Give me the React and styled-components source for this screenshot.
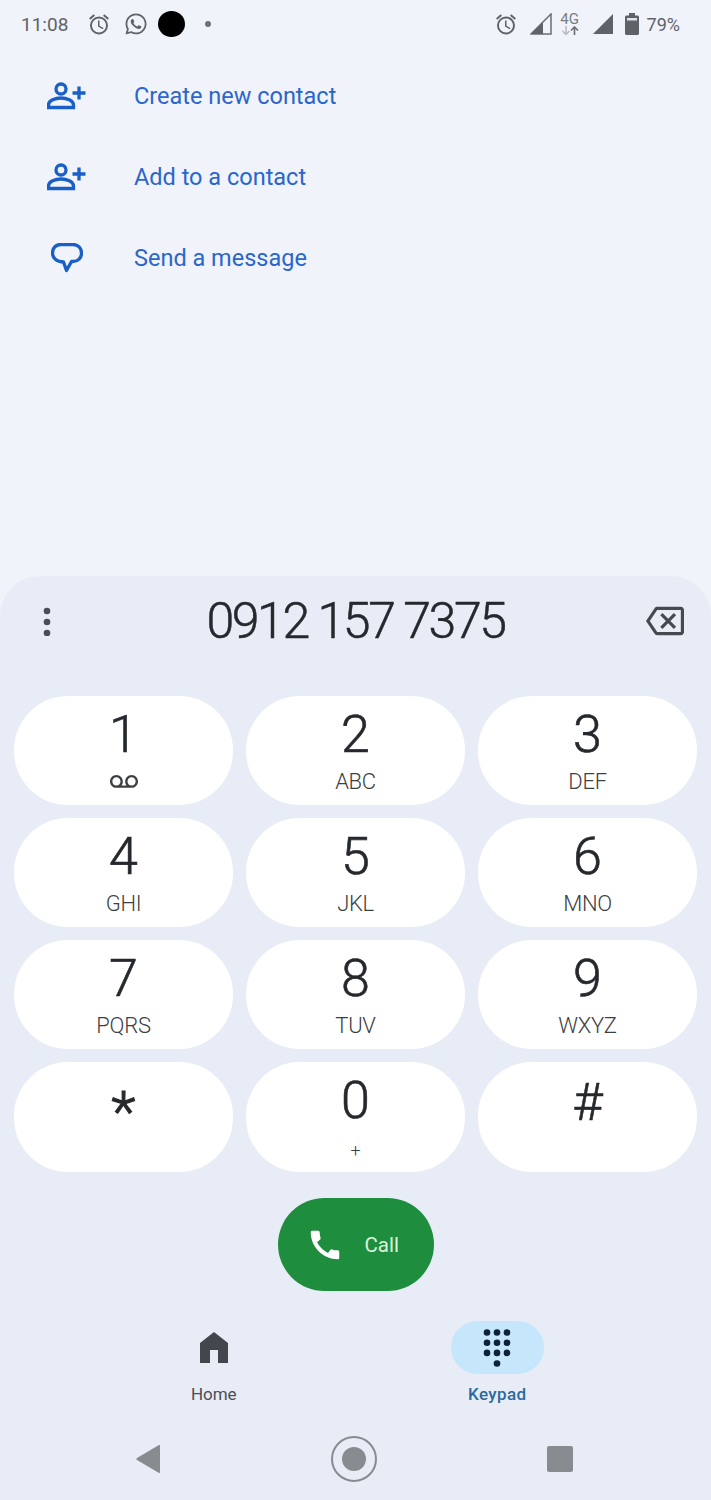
import React from 'react'
import styled, { createGlobalStyle } from 'styled-components'
import { FaWhatsapp } from 'react-icons/fa'
import { MdOutlineAlarm, MdOutlineBackspace, MdCall, MdVoicemail } from 'react-icons/md'

const GlobalStyle = createGlobalStyle`
  html, body {
    margin: 0;
    padding: 0;
    background: #f0f3fa;
  }
  * {
    box-sizing: border-box;
  }
`

const Page = styled.div`
  width: 711px;
  height: 1500px;
  display: flex;
  flex-direction: column;
  background: #f0f3fa;
  font-family: Roboto, "Liberation Sans", sans-serif;
  overflow: hidden;
`

const StatusBar = styled.div`
  height: 48px;
  flex: none;
  display: flex;
  align-items: center;
  justify-content: space-between;
  padding: 0 31px 0 21px;
  color: #5f6368;
`

const StatusGroup = styled.div`
  display: flex;
  align-items: center;
`

const Clock = styled.span`
  font-size: 19px;
  width: 66px;
`

const Battery = styled.span`
  font-size: 18px;
  margin-left: 8px;
`

const StatusSlot = styled.span`
  display: flex;
  align-items: center;
  justify-content: center;
  width: ${p => p.$w}px;
  margin-left: ${p => p.$ml || 0}px;
  margin-right: ${p => p.$mr || 0}px;
`

const Blot = styled.span`
  display: block;
  width: 27px;
  height: 26px;
  border-radius: 50%;
  background: #000;
`

const Dot = styled.span`
  display: block;
  width: 6px;
  height: 6px;
  border-radius: 50%;
  background: #6b7074;
`

const NetStack = styled.span`
  display: flex;
  flex-direction: column;
  align-items: center;
  width: 20px;
  margin: 0 12px 0 8px;
  line-height: 1;
`

const NetLabel = styled.span`
  font-size: 15px;
  line-height: 13px;
  color: #797e83;
`

const ActionList = styled.div`
  padding: 7px 0 0 47px;
`

const ActionRow = styled.div`
  height: 81px;
  display: flex;
  align-items: center;
  gap: 48px;
  color: #1a5fc8;
`

const ActionIcon = styled.span`
  width: 40px;
  display: flex;
  justify-content: center;
  padding-top: 1px;
`

const ActionText = styled.span`
  font-size: 23.5px;
  margin-left: -1px;
  color: #2a66cc;
`

const Sheet = styled.div`
  margin-top: auto;
  height: 924px;
  display: flex;
  flex-direction: column;
  background: #e8ecf6;
  border-radius: 40px 40px 0 0;
`

const NumberRow = styled.div`
  height: 90px;
  flex: none;
  display: flex;
  align-items: center;
  justify-content: space-between;
  padding: 0 27px 0 42px;
  color: #444a50;
`

const Number = styled.div`
  font-size: 50px;
  font-weight: 300;
  -webkit-text-stroke: 0.5px #25282c;
  letter-spacing: -2.4px;
  color: #25282c;
  margin-left: 13px;
`

const Keys = styled.div`
  margin: 30px 14px 0;
  height: 476px;
  display: grid;
  grid-template-columns: repeat(3, 1fr);
  grid-auto-rows: 1fr;
  gap: 13px;
`

const Key = styled.div`
  background: #fff;
  border-radius: 54px;
  display: flex;
  flex-direction: column;
  align-items: center;
  color: #25282c;
`

const Digit = styled.span`
  font-size: ${p => p.$size || 52}px;
  line-height: 60px;
  height: 60px;
  margin-top: ${p => p.$top || 9}px;
  font-weight: 300;
  -webkit-text-stroke: ${p => p.$stroke || 0.6}px #25282c;
`

const Letters = styled.span`
  font-size: ${p => (p.$small ? 18 : 22)}px;
  line-height: 26px;
  font-weight: 300;
  letter-spacing: -0.3px;
  color: #3c4043;
  display: flex;
  align-items: center;
  height: 26px;
  margin-top: ${p => (p.$small ? 7 : 4)}px;
`

const CallButton = styled.div`
  margin: 26px auto 0;
  width: 156px;
  height: 93px;
  flex: none;
  background: #1e8e3e;
  border-radius: 47px;
  display: flex;
  align-items: center;
  padding-left: 28px;
  gap: 21px;
  color: #fff;
`

const CallText = styled.span`
  font-size: 20.5px;
  color: #d8f5de;
`

const Tabs = styled.div`
  margin-top: 30px;
  padding: 0 72px;
  display: grid;
  grid-template-columns: 1fr 1fr;
`

const Tab = styled.div`
  display: flex;
  flex-direction: column;
  align-items: center;
`

const TabPill = styled.div`
  width: 93px;
  height: 53px;
  border-radius: 27px;
  display: flex;
  align-items: center;
  justify-content: center;
  background: ${p => (p.$active ? '#c6e6fb' : 'transparent')};
`

const TabLabel = styled.span`
  margin-top: 9px;
  font-size: 17px;
  line-height: 22px;
  font-weight: ${p => (p.$active ? 500 : 400)};
  letter-spacing: ${p => (p.$active ? '0.4px' : '0')};
  color: ${p => (p.$active ? '#2a6a9c' : '#4a4f55')};
`

const NavBar = styled.div`
  margin-top: 31px;
  padding: 0 138px 0 136px;
  display: flex;
  align-items: center;
  justify-content: space-between;
`

const AddPerson = () => (
  <svg width="40" height="28" viewBox="0 0 40 28" fill="none" stroke="#1a5fc8" strokeWidth="3.300">
    <circle cx="14" cy="7" r="5" />
    <path d="M1.500 25.500v-2.500c0-4.500 7-7 12.500-7s12.500 2.500 12.500 7v2.500z" />
    <path d="M32 4.500v13M25.500 11h13" />
  </svg>
)

const Bubble = () => (
  <svg width="32" height="30" viewBox="0 0 32 30" fill="none" stroke="#1a5fc8" strokeWidth="3.300" strokeLinejoin="round">
    <path d="M10 1.500h12c5 0 8.500 3.500 8.500 8.500s-3.500 8.500-8.500 8.500h-1.500l-5 9-3-8.500C6 19 1.500 15.500 1.500 10S5 1.500 10 1.500z" />
  </svg>
)

const DotsMenu = () => (
  <svg width="10" height="30" viewBox="0 0 10 30" fill="#4a4f55">
    <circle cx="5" cy="5" r="3.300" />
    <circle cx="5" cy="16" r="3.300" />
    <circle cx="5" cy="27" r="3.300" />
  </svg>
)

const SignalIcon = ({ partial }) => (
  <svg width="22" height="22" viewBox="0 0 22 22">
    {partial ? (
      <>
        <path d="M1 21L21 1v20z" fill="none" stroke="#6a6f74" strokeWidth="1.500" />
        <path d="M1 21l12-12v12z" fill="#5f6368" />
      </>
    ) : (
      <path d="M1 21L21 1v20z" fill="#5f6368" />
    )}
  </svg>
)

const BatteryIcon = () => (
  <svg width="14" height="22" viewBox="0 0 14 22" fill="#5f6368">
    <path d="M4 0h6v2.500h2.500c.8 0 1.500.7 1.500 1.500v16.500c0 .8-.7 1.500-1.500 1.500h-11C.7 22 0 21.300 0 20.500V4c0-.8.7-1.500 1.500-1.500H4z" />
    <rect x="2" y="5" width="10" height="2.500" fill="#dfe3ea" />
  </svg>
)

const NetArrows = () => (
  <svg width="20" height="9" viewBox="0 0 20 9" fill="none" strokeWidth="1.600">
    <path d="M6 0v8M2.500 5L6 8.500 9.500 5" stroke="#b9bdc3" />
    <path d="M14.500 9V1M11 4.500L14.500 1 18 4.500" stroke="#6a6f74" />
  </svg>
)

const HomeIcon = () => (
  <svg width="30" height="31" viewBox="0 0 30 31" fill="#41474d">
    <path d="M15 0l14 11v20H19V18h-8v13H1V11z" strokeLinejoin="round" />
  </svg>
)

const DialpadIcon = () => (
  <svg width="30" height="38" viewBox="0 0 30 38" fill="#0d2138">
    {[0, 1, 2].flatMap(r =>
      [5, 15, 25].map(x => <circle key={`${r}-${x}`} cx={x} cy={3.5 + r * 10.2} r="3.300" />)
    )}
    <circle cx="15" cy="34.500" r="3.300" />
  </svg>
)

const BackIcon = () => (
  <svg width="25" height="28" viewBox="0 0 25 28" fill="#878c91">
    <path d="M24 1v26a1 1 0 0 1-1.500.8L1 15a1.200 1.200 0 0 1 0-2L22.500.2A1 1 0 0 1 24 1z" />
  </svg>
)

const HomeNavIcon = () => (
  <svg width="46" height="46" viewBox="0 0 46 46">
    <circle cx="23" cy="23" r="22" fill="none" stroke="#878c91" strokeWidth="2" />
    <circle cx="23" cy="23" r="12" fill="#878c91" />
  </svg>
)

const RecentsIcon = () => (
  <svg width="26" height="26" viewBox="0 0 26 26">
    <rect width="26" height="26" rx="2" fill="#878c91" />
  </svg>
)

const keys = [
  { d: '1', icon: true },
  { d: '2', l: 'ABC' },
  { d: '3', l: 'DEF' },
  { d: '4', l: 'GHI' },
  { d: '5', l: 'JKL' },
  { d: '6', l: 'MNO' },
  { d: '7', l: 'PQRS' },
  { d: '8', l: 'TUV' },
  { d: '9', l: 'WXYZ' },
  { d: '*', top: 20, size: 56, stroke: 1.2 },
  { d: '0', l: '+', small: true },
  { d: '#', top: 11 },
]

const App = () => {
  return (
    <Page>
      <GlobalStyle />
      <StatusBar>
        <StatusGroup>
          <Clock>11:08</Clock>
          <StatusSlot $w={24} $mr={13}><MdOutlineAlarm size={25} /></StatusSlot>
          <StatusSlot $w={24} $mr={10}><FaWhatsapp size={24} /></StatusSlot>
          <StatusSlot $w={27} $mr={20}><Blot /></StatusSlot>
          <Dot />
        </StatusGroup>
        <StatusGroup>
          <StatusSlot $w={24} $mr={12}><MdOutlineAlarm size={25} /></StatusSlot>
          <SignalIcon partial />
          <NetStack>
            <NetLabel>4G</NetLabel>
            <NetArrows />
          </NetStack>
          <SignalIcon />
          <StatusSlot $w={14} $ml={11}><BatteryIcon /></StatusSlot>
          <Battery>79%</Battery>
        </StatusGroup>
      </StatusBar>

      <ActionList>
        <ActionRow>
          <ActionIcon><AddPerson /></ActionIcon>
          <ActionText>Create new contact</ActionText>
        </ActionRow>
        <ActionRow>
          <ActionIcon><AddPerson /></ActionIcon>
          <ActionText>Add to a contact</ActionText>
        </ActionRow>
        <ActionRow>
          <ActionIcon><Bubble /></ActionIcon>
          <ActionText>Send a message</ActionText>
        </ActionRow>
      </ActionList>

      <Sheet>
        <NumberRow>
          <DotsMenu />
          <Number>0912 157 7375</Number>
          <MdOutlineBackspace size={38} />
        </NumberRow>

        <Keys>
          {keys.map(k => (
            <Key key={k.d}>
              <Digit $top={k.top} $size={k.size} $stroke={k.stroke}>{k.d}</Digit>
              <Letters $small={k.small}>
                {k.icon ? <MdVoicemail size={28} color="#3c4043" /> : k.l}
              </Letters>
            </Key>
          ))}
        </Keys>

        <CallButton>
          <MdCall size={38} />
          <CallText>Call</CallText>
        </CallButton>

        <Tabs>
          <Tab>
            <TabPill><HomeIcon /></TabPill>
            <TabLabel>Home</TabLabel>
          </Tab>
          <Tab>
            <TabPill $active><DialpadIcon /></TabPill>
            <TabLabel $active>Keypad</TabLabel>
          </Tab>
        </Tabs>

        <NavBar>
          <BackIcon />
          <HomeNavIcon />
          <RecentsIcon />
        </NavBar>
      </Sheet>
    </Page>
  )
}

export default App
